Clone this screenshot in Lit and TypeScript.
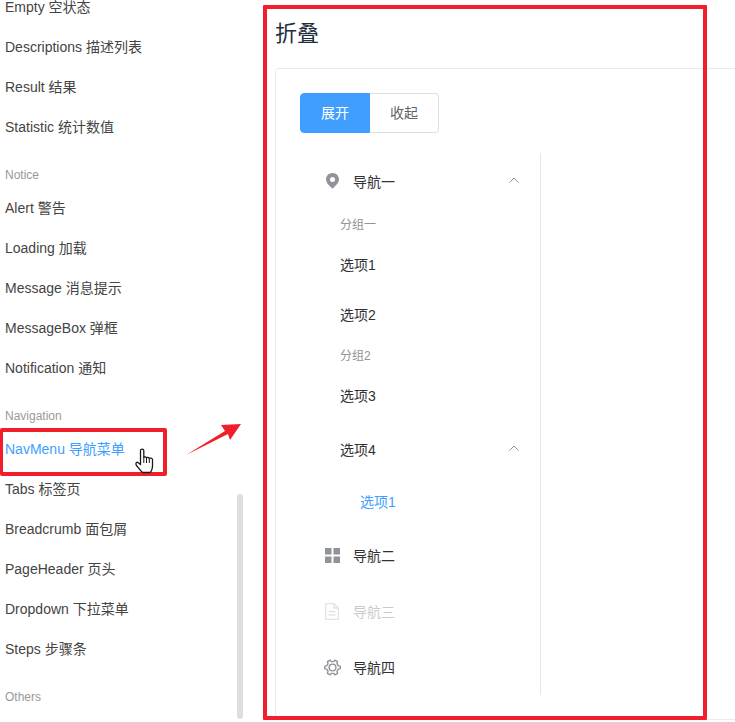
import { LitElement, html, css, svg } from "lit";
import { customElement } from "lit/decorators.js";

const chevron = html`<svg class="chev" width="12" height="8" viewBox="0 0 12 8"><path d="M1.500 5.500 L6 1 L10.500 5.500" fill="none" stroke="#7f9ab3" stroke-width="1"/></svg>`;
const pin = svg`<path fill="#909399" fill-rule="evenodd" d="M6.500 0C2.900 0 0 2.800 0 6.400 0 10.500 6.500 15.500 6.500 15.500S13 10.500 13 6.400C13 2.800 10.100 0 6.500 0ZM6.500 4A2.500 2.500 0 1 1 6.500 9 2.500 2.500 0 0 1 6.500 4Z"/>`;

@customElement("app-root")
export class AppRoot extends LitElement {
  static styles = css`
    :host {
      display: block;
      position: relative;
      width: 735px;
      height: 722px;
      overflow: hidden;
      background: #fff;
      font-family: "Liberation Sans", "Noto Sans CJK SC", sans-serif;
      font-size: 14px;
    }
    .page { display: flex; align-items: flex-start; }
    .side { width: 275px; flex: none; margin-top: -13px; }
    .link { height: 40px; line-height: 40px; padding-left: 5px; color: #444; white-space: nowrap; }
    .link.on { color: #409eff; }
    .cat { height: 14px; line-height: 14px; padding: 21px 0 6px 5px; font-size: 12px; color: #999; }
    .main { flex: none; width: 500px; }
    h3 { margin: 0; height: 68px; line-height: 68px; font-size: 22px; font-weight: 400; color: #1f2f3d; }
    .card { border: 1px solid #ebebeb; border-radius: 3px; padding: 24px; }
    .btns { display: flex; margin-bottom: 20px; }
    .btn { height: 40px; box-sizing: border-box; line-height: 38px; padding: 0 20px; border: 1px solid #dcdfe6; color: #606266; background: #fff; }
    .btn.on { width: 70px; background: #409eff; border-color: #409eff; color: #fff; border-radius: 4px 0 0 4px; text-align: center; }
    .btn.off { border-left: 0; border-radius: 0 4px 4px 0; }
    .menu { width: 241px; box-sizing: border-box; border-right: 1px solid #e6e6e6; color: #303133; }
    .row { display: flex; align-items: center; height: 56px; padding: 0 20px; }
    .row.sub { padding-left: 40px; }
    .row.dis { opacity: .25; }
    .ico { width: 24px; margin-right: 9px; display: flex; justify-content: center; flex: none; }
    .chev { margin-left: auto; }
    .group { height: 17px; line-height: 17px; padding: 8px 0 6px 40px; font-size: 12px; color: #909399; }
    .opt { height: 50px; line-height: 50px; padding-left: 40px; }
    .opt.deep { padding-left: 60px; color: #409eff; }
    .bar { position: absolute; left: 237px; top: 494px; width: 6px; height: 225px; border-radius: 3px; background: #dddee0; }
    .mark { position: absolute; box-sizing: border-box; border: 4px solid #f01f2a; }
    .mark.a { left: 0; top: 428px; width: 167px; height: 48px; border-left-width: 3px; border-radius: 2px; }
    .mark.b { left: 263px; top: 5px; width: 444px; height: 715px; border-radius: 1px; }
    .over { position: absolute; overflow: visible; }
    .arrow { left: 0; top: 0; }
    .hand { left: 135px; top: 448px; }
  `;

  private link(t: string, on = false) {
    return html`<div class="link ${on ? "on" : ""}">${t}</div>`;
  }

  render() {
    return html`
      <div class="page">
        <nav class="side">
          ${this.link("Empty 空状态")}
          ${this.link("Descriptions 描述列表")}
          ${this.link("Result 结果")}
          ${this.link("Statistic 统计数值")}
          <div class="cat">Notice</div>
          ${this.link("Alert 警告")}
          ${this.link("Loading 加载")}
          ${this.link("Message 消息提示")}
          ${this.link("MessageBox 弹框")}
          ${this.link("Notification 通知")}
          <div class="cat">Navigation</div>
          ${this.link("NavMenu 导航菜单", true)}
          ${this.link("Tabs 标签页")}
          ${this.link("Breadcrumb 面包屑")}
          ${this.link("PageHeader 页头")}
          ${this.link("Dropdown 下拉菜单")}
          ${this.link("Steps 步骤条")}
          <div class="cat">Others</div>
        </nav>
        <main class="main">
          <h3>折叠</h3>
          <div class="card">
            <div class="btns">
              <div class="btn on">展开</div>
              <div class="btn off">收起</div>
            </div>
            <div class="menu">
              <div class="row">
                <span class="ico"><svg width="13" height="16" viewBox="0 0 13 16">${pin}</svg></span>
                导航一 ${chevron}
              </div>
              <div class="group">分组一</div>
              <div class="opt">选项1</div>
              <div class="opt">选项2</div>
              <div class="group">分组2</div>
              <div class="opt">选项3</div>
              <div class="row sub">选项4 ${chevron}</div>
              <div class="opt deep">选项1</div>
              <div class="row">
                <span class="ico"><svg width="15" height="15" viewBox="0 0 15 15" fill="#909399"><rect width="6.500" height="6.500"/><rect x="8.500" width="6.500" height="6.500"/><rect y="8.500" width="6.500" height="6.500"/><rect x="8.500" y="8.500" width="6.500" height="6.500"/></svg></span>
                导航二
              </div>
              <div class="row dis">
                <span class="ico"><svg width="14" height="17" viewBox="0 0 14 17" fill="none" stroke="#909399" stroke-width="1.300"><path d="M.7.700H9L13.300 5V16.300H.7Z"/><path d="M9 .7V5H13.300M3.500 8.500H10.500M3.500 12H10.500"/></svg></span>
                导航三
              </div>
              <div class="row">
                <span class="ico"><svg width="17" height="17" viewBox="0 0 16 16" fill="none" stroke="#909399" stroke-width="1.300" stroke-linejoin="round"><path d="M5.800 1 6.700 2.500H9.300L10.200 1 12.800 2.500 12.200 4.300 13.500 6.500 15.400 7V9L13.500 9.500 12.200 11.700 12.800 13.500 10.200 15 9.300 13.500H6.700L5.800 15 3.200 13.500 3.800 11.700 2.500 9.500 .6 9V7L2.500 6.500 3.800 4.300 3.200 2.500Z"/><circle cx="8" cy="8" r="3.200"/></svg></span>
                导航四
              </div>
            </div>
          </div>
        </main>
      </div>
      <div class="bar"></div>
      <div class="mark a"></div>
      <div class="mark b"></div>
      <svg class="over arrow" width="735" height="722"><path fill="#f01f2a" d="M186 455 225 431 221 425 241 424 230 440 228 434Z"/></svg>
      <svg class="over hand" width="20" height="26" viewBox="0 0 20 26"><path fill="#fff" stroke="#1a1a1a" stroke-width="1.300" stroke-linejoin="round" d="M5.500 2.500C5.500 .7 8.800 .7 8.800 2.500V9.500C9.200 8.500 11.200 8.500 11.500 10 11.700 9 14 9 14.300 10.500 14.800 9.700 17.300 10 17.500 11.500V18C17.500 21 16 24 15 24.500H7.500C5.500 23 3.500 20 1.500 17.500 .3 16 1 13.500 3 14.500L5.500 16.500Z"/><path stroke="#1a1a1a" stroke-width="1" fill="none" d="M8.800 9.500V15M11.500 10V15M14.300 10.500V15"/></svg>
    `;
  }
}
